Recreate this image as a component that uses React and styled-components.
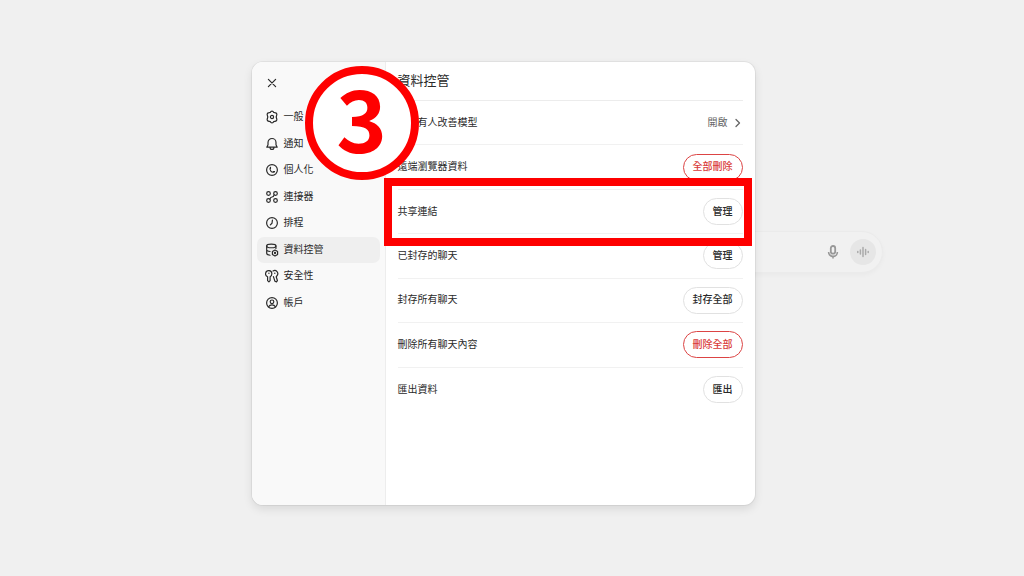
import styled, { createGlobalStyle, css } from 'styled-components'
import { useState } from 'react'

const GlobalStyle = createGlobalStyle`
  * {
    box-sizing: border-box;
  }
  body {
    margin: 0;
    background: #f0f0f0;
    color: #2a2a2a;
    font-family: "Liberation Sans", "Noto Sans CJK TC", sans-serif;
    font-size: 10px;
    line-height: 14px;
  }
  button {
    font: inherit;
    color: inherit;
    cursor: pointer;
  }
`
const Page = styled.main`
  position: relative;
  min-height: 100vh;
  padding: 62px 18px 71px 0;
  display: flex;
  justify-content: center;
  align-items: stretch;
  overflow: hidden;
`
const Composer = styled.div`
  position: absolute;
  left: calc(50% - 142px);
  top: 231px;
  width: 513px;
  height: 42px;
  padding: 0 6px;
  display: flex;
  justify-content: flex-end;
  align-items: center;
  gap: 10px;
  background: #f1f1f1;
  border: 1px solid #ebebeb;
  border-radius: 21px;
  box-shadow: 0 2px 5px rgba(0, 0, 0, 0.03);
  color: #989898;
`
const ComposerButton = styled.button`
  width: ${({ $round }) => ($round ? '26px' : '14px')};
  height: 26px;
  padding: 0;
  display: flex;
  align-items: center;
  justify-content: center;
  border: 0;
  border-radius: 50%;
  background: ${({ $round }) => ($round ? '#e6e6e6' : 'transparent')};
`
const Modal = styled.section`
  position: relative;
  width: 503px;
  max-width: 100%;
  min-height: 443px;
  display: flex;
  background: #fff;
  border-radius: 11px;
  box-shadow: 0 0 0 1px rgba(0, 0, 0, 0.05), 0 4px 10px rgba(0, 0, 0, 0.1);
`
const Sidebar = styled.aside`
  width: 134px;
  flex-shrink: 0;
  padding: 10px 5px;
  background: #f9f9f9;
  border-right: 1px solid #ededed;
  border-radius: 11px 0 0 11px;
`
const Close = styled.button`
  width: 22px;
  height: 22px;
  margin: 0 0 10px 4px;
  padding: 0;
  display: flex;
  align-items: center;
  justify-content: center;
  background: transparent;
  border: 0;
`
const Menu = styled.nav`
  height: 212px;
  display: grid;
  grid-template-rows: repeat(8, 1fr);
`
const MenuItem = styled.button`
  padding: 0 8px;
  display: flex;
  align-items: center;
  gap: 5px;
  border: 0;
  border-radius: 7px;
  text-align: left;
  background: ${({ $active }) => ($active ? '#efefef' : 'transparent')};
`
const Content = styled.div`
  flex: 1;
  min-width: 0;
  padding: 0 12px;
`
const Title = styled.h1`
  height: 39px;
  margin: 0;
  font-size: 13px;
  line-height: 37px;
  font-weight: 400;
  border-bottom: 1px solid #ececec;
`
const Settings = styled.div`
  height: 311px;
  display: grid;
  grid-template-rows: repeat(7, 1fr);
`
const Row = styled.div`
  display: flex;
  align-items: center;
  justify-content: space-between;
  border-bottom: 1px solid #f1f1f1;
  &:last-child {
    border-bottom: 0;
  }
`
const tones = {
  plain: css`
    border: 1px solid #e1e1e1;
  `,
  danger: css`
    border: 1px solid #dc4444;
    color: #d93a3a;
  `,
}
const Pill = styled.button`
  height: 27px;
  padding: 0 9px;
  background: #fff;
  border-radius: 14px;
  font-weight: 500;
  ${({ $tone }) => tones[$tone]}
`
const LinkButton = styled.button`
  padding: 0;
  display: flex;
  align-items: center;
  gap: 5px;
  border: 0;
  background: transparent;
  color: #666;
`
const StepBadge = styled.div`
  position: absolute;
  left: 53px;
  top: 4px;
  width: 114px;
  height: 114px;
  padding-bottom: 14px;
  display: flex;
  align-items: center;
  justify-content: center;
  border: 8px solid #fe0000;
  border-radius: 50%;
  background: #fff;
  color: #fe0000;
  font-family: "Noto Sans CJK TC", sans-serif;
  font-size: 86px;
  line-height: 84px;
  font-weight: 700;
`
const Highlight = styled.div`
  position: absolute;
  left: 132px;
  right: 3px;
  top: 116px;
  height: 68px;
  border: 8px solid #fe0000;
  pointer-events: none;
`

const Icon = ({ children, size = 14, width = 1.7 }) => (
  <svg
    width={size}
    height={size}
    viewBox="0 0 20 20"
    fill="none"
    stroke="currentColor"
    strokeWidth={width}
    strokeLinecap="round"
    strokeLinejoin="round"
    aria-hidden="true"
  >
    {children}
  </svg>
)

const icons = {
  general: (
    <>
      <path d="M8.4 2.2q1.6-.9 3.2 0l.8 1.3 1.6.2q1.8 0 2.6 1.5.7 1.3 0 2.6L16 10l.6 2.2q.7 1.3 0 2.6-.8 1.5-2.6 1.5l-1.6.2-.8 1.3q-1.6.9-3.2 0l-.8-1.3-1.6-.2q-1.8 0-2.6-1.5-.7-1.3 0-2.6L4 10l-.6-2.2q-.7-1.3 0-2.6Q4.2 3.7 6 3.7l1.6-.2z" />
      <circle cx="10" cy="10" r="2.3" />
    </>
  ),
  notice: (
    <path d="M2.6 14.5 4.3 11V7.8a5.7 5.7 0 0 1 11.4 0V11l1.7 3.5zM7.2 15a2.8 2.8 0 0 0 5.6 0" />
  ),
  personal: (
    <>
      <circle cx="10" cy="10" r="7.7" />
      <path d="M7.8 6.2a4.4 4.4 0 0 0 5.8 6.2M7.8 6.2v1.6M13.6 12.4h-1.6" />
    </>
  ),
  connectors: (
    <>
      <circle cx="5" cy="5" r="2.6" />
      <circle cx="15" cy="5" r="2.6" />
      <circle cx="5" cy="15" r="2.6" />
      <circle cx="15" cy="15" r="2.6" />
      <path d="M13 7q-.6 3-3 3t-3 3" />
    </>
  ),
  schedule: (
    <>
      <circle cx="10" cy="10" r="7.7" />
      <path d="M10.6 5.8 10 10.3l-2.4 2.3" />
    </>
  ),
  data: (
    <>
      <ellipse cx="9" cy="4.2" rx="6.6" ry="2.6" />
      <path d="M2.4 4.2v10.6c0 1.4 2 2.4 4.8 2.7M15.6 4.2v3.6M2.4 9.6c0 1.3 2 2.2 4.8 2.5" />
      <path d="m14.3 10 3.7 2.1v4.3l-3.7 2.1-3.7-2.1v-4.3z" />
      <circle cx="14.3" cy="14.3" r=".8" />
    </>
  ),
  security: (
    <>
      <path d="M3.7 11A4.5 4.5 0 1 1 9.8 6.7c0 2-1 3.6-2.5 4.3v5.6l-1.7 1.8L3.7 16.6z" />
      <path d="M11.4 2.9a4.4 4.4 0 0 1 5.6 6.7q-.3.8-1 1.4l1.7 5.5-1.3 1.9-2.2-.9-2.2-6.6" />
      <path d="M5.6 6v.2M14 6v.2" strokeWidth="2" />
    </>
  ),
  account: (
    <>
      <circle cx="10" cy="10" r="7.7" />
      <circle cx="10" cy="8.3" r="2.6" />
      <path d="M5.2 15.5c1-2 2.7-2.8 4.8-2.8s3.8.8 4.8 2.8" />
    </>
  ),
}

const menu = [
  ['general', '一般'],
  ['notice', '通知'],
  ['personal', '個人化'],
  ['connectors', '連接器'],
  ['schedule', '排程'],
  ['data', '資料控管'],
  ['security', '安全性'],
  ['account', '帳戶'],
]

const settings = [
  { label: '遠端瀏覽器資料', action: '全部刪除', tone: 'danger' },
  { label: '共享連結', action: '管理', tone: 'plain' },
  { label: '已封存的聊天', action: '管理', tone: 'plain' },
  { label: '封存所有聊天', action: '封存全部', tone: 'plain' },
  { label: '刪除所有聊天內容', action: '刪除全部', tone: 'danger' },
  { label: '匯出資料', action: '匯出', tone: 'plain' },
]

const App = () => {
  const [active, setActive] = useState('data')
  return (
    <Page>
      <GlobalStyle />
      <Composer>
        <ComposerButton aria-label="語音輸入">
          <svg width="14" height="14" viewBox="0 0 14 14" fill="none" stroke="currentColor" aria-hidden="true">
            <rect x="4.8" y="1" width="4.4" height="7.6" rx="2.2" strokeWidth="1.8" />
            <path d="M2.6 7a4.4 4.4 0 0 0 8.8 0M7 11.4V13.4" strokeWidth="1.6" />
          </svg>
        </ComposerButton>
        <ComposerButton $round aria-label="語音模式">
          <svg width="14" height="14" viewBox="0 0 14 14" stroke="#aaa" strokeWidth="1.5" strokeLinecap="round" aria-hidden="true">
            <path d="M1.8 6.6v.8M4.4 5v4M7 2.4v9.2M9.6 4.6v4.8M12.2 6.6v.8" />
          </svg>
        </ComposerButton>
      </Composer>
      <Modal aria-label="資料控管">
        <Sidebar>
          <Close aria-label="關閉">
            <Icon size={12} width={2}>
              <path d="m4 4 12 12M16 4 4 16" />
            </Icon>
          </Close>
          <Menu>
            {menu.map(([id, label]) => (
              <MenuItem key={id} $active={id === active} onClick={() => setActive(id)}>
                <Icon>{icons[id]}</Icon>
                {label}
              </MenuItem>
            ))}
          </Menu>
        </Sidebar>
        <Content>
          <Title>資料控管</Title>
          <Settings>
            <Row>
              <span>為所有人改善模型</span>
              <LinkButton>
                開啟
                <Icon size={10} width={2.6}>
                  <path d="m6 3 7 7-7 7" />
                </Icon>
              </LinkButton>
            </Row>
            {settings.map(({ label, action, tone }) => (
              <Row key={label}>
                <span>{label}</span>
                <Pill $tone={tone}>{action}</Pill>
              </Row>
            ))}
          </Settings>
        </Content>
        <StepBadge>3</StepBadge>
        <Highlight />
      </Modal>
    </Page>
  )
}

export default App
